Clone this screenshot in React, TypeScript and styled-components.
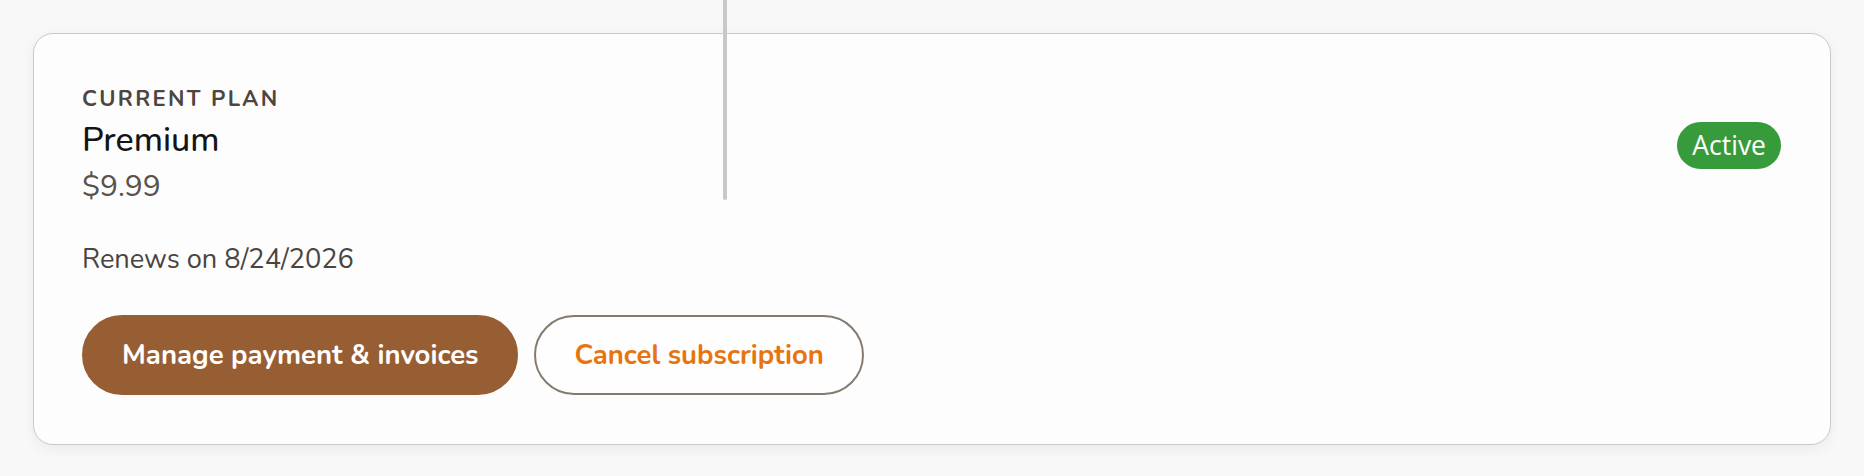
import React from "react";
import styled, { createGlobalStyle } from "styled-components";

const Global = createGlobalStyle`
  html, body { margin: 0; padding: 0; }
  body {
    background: #f8f8f8;
    font-family: "Nunito", "Open Sans", "Noto Sans", sans-serif;
    -webkit-font-smoothing: antialiased;
  }
`;

const Page = styled.main`
  position: relative;
  padding: 33px 33px 32px 33px;
`;

const ScrollGuide = styled.div`
  position: absolute;
  left: 723px;
  top: 0;
  width: 4px;
  height: 200px;
  border-radius: 0 0 2px 2px;
  background: #c8c8c8;
  z-index: 2;
`;

const Card = styled.section`
  background: #fdfdfd;
  border: 1.5px solid #c9c9c9;
  border-radius: 20px;
  box-shadow: 0 4px 14px rgba(0, 0, 0, 0.06);
  padding: 50px 48px 49px 48px;
  display: flex;
  flex-direction: column;
`;

const Header = styled.div`
  display: flex;
  justify-content: space-between;
  align-items: center;
`;

const PlanInfo = styled.div`
  display: flex;
  flex-direction: column;
`;

const Label = styled.div`
  font-size: 22px;
  line-height: 30px;
  font-weight: 700;
  letter-spacing: 0.105em;
  color: #4c4540;
  text-transform: uppercase;
`;

const PlanName = styled.div`
  margin-top: 6px;
  font-size: 34px;
  line-height: 41px;
  font-weight: 500;
  color: #141414;
`;

const Price = styled.div`
  margin-top: 6px;
  font-size: 30px;
  line-height: 39px;
  color: #57524e;
`;

const Badge = styled.span`
  display: inline-flex;
  align-items: center;
  justify-content: center;
  height: 47px;
  padding: 0 15px;
  border-radius: 24px;
  background: #389b3b;
  color: #ffffff;
  font-family: "Open Sans", "Noto Sans", sans-serif;
  font-size: 26.5px;
  font-weight: 500;
  margin-right: 1px;
`;

const Renews = styled.div`
  margin-top: 36px;
  font-size: 27.2px;
  line-height: 36px;
  color: #4a4542;
`;

const Actions = styled.div`
  margin-top: 37px;
  display: flex;
  gap: 16px;
`;

const Button = styled.button<{ $variant: "primary" | "outline" }>`
  height: 80px;
  padding: 0 38px;
  border-radius: 40px;
  font-family: inherit;
  font-size: 27.5px;
  font-weight: 700;
  cursor: pointer;
  border: 2px solid ${(p) => (p.$variant === "primary" ? "#985e33" : "#857a70")};
  background: ${(p) => (p.$variant === "primary" ? "#985e33" : "#fefefe")};
  color: ${(p) => (p.$variant === "primary" ? "#ffffff" : "#e8740f")};
`;

export default function App() {
  return (
    <>
      <Global />
      <Page>
        <ScrollGuide />
        <Card>
          <Header>
            <PlanInfo>
              <Label>Current plan</Label>
              <PlanName>Premium</PlanName>
              <Price>$9.99</Price>
            </PlanInfo>
            <Badge>Active</Badge>
          </Header>
          <Renews>Renews on 8/24/2026</Renews>
          <Actions>
            <Button $variant="primary">Manage payment &amp; invoices</Button>
            <Button $variant="outline">Cancel subscription</Button>
          </Actions>
        </Card>
      </Page>
    </>
  );
}
